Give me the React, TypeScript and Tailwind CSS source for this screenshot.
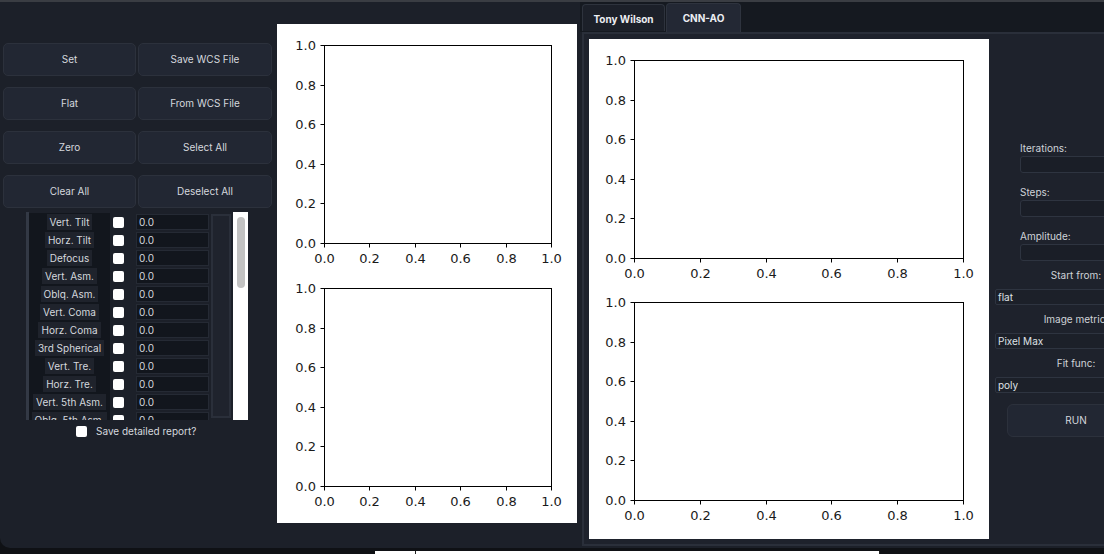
const ui = "font-['Inter','Liberation_Sans',sans-serif]";

const TICKS = [0, 0.2, 0.4, 0.6, 0.8, 1.0];

const ZERNIKE = [
  'Vert. Tilt',
  'Horz. Tilt',
  'Defocus',
  'Vert. Asm.',
  'Oblq. Asm.',
  'Vert. Coma',
  'Horz. Coma',
  '3rd Spherical',
  'Vert. Tre.',
  'Horz. Tre.',
  'Vert. 5th Asm.',
  'Oblq. 5th Asm.',
];

// One empty matplotlib axes: frame, outward ticks and 0.0..1.0 labels.
function Axes({ x, y, w, h }: { x: number; y: number; w: number; h: number }) {
  return (
    <g>
      <rect x={x + 0.5} y={y + 0.5} width={w} height={h} fill="none" stroke="#000" strokeWidth={1} />
      {TICKS.map((t) => {
        const ty = Math.round(y + h - t * h) + 0.5;
        const tx = Math.round(x + t * w) + 0.5;
        return (
          <g key={t}>
            <line x1={x + 0.5} x2={x - 3.5} y1={ty} y2={ty} stroke="#000" strokeWidth={1} />
            <text x={x - 8} y={ty} textAnchor="end" dominantBaseline="central">
              {t.toFixed(1)}
            </text>
            <line x1={tx} x2={tx} y1={y + h + 0.5} y2={y + h + 4.5} stroke="#000" strokeWidth={1} />
            <text x={tx} y={y + h + 15.5} textAnchor="middle" dominantBaseline="central">
              {t.toFixed(1)}
            </text>
          </g>
        );
      })}
    </g>
  );
}

function Figure({
  width,
  height,
  x,
  w,
  tops,
  h,
}: {
  width: number;
  height: number;
  x: number;
  w: number;
  tops: number[];
  h: number;
}) {
  return (
    <svg
      width={width}
      height={height}
      className="block bg-white"
      fontFamily="'DejaVu Sans', sans-serif"
      fontSize={13}
      fill="#1a1a1a"
    >
      {tops.map((top) => (
        <Axes key={top} x={x} y={top} w={w} h={h} />
      ))}
    </svg>
  );
}

function Button({ label, className = '' }: { label: string; className?: string }) {
  return (
    <div
      className={`flex h-[33px] items-center justify-center rounded-[5px] border border-[#2c313c] bg-[#222733] text-[10px] text-[#d5d8de] ${className}`}
    >
      {label}
    </div>
  );
}

function Checkbox() {
  return <span className="block size-[11px] rounded-[2px] bg-white" />;
}

function LeftPanel() {
  return (
    <div className="flex w-[277px] shrink-0 flex-col pt-[41px]">
      <div className="ml-[3px] grid w-[269px] grid-cols-[133px_134px] gap-x-[2px] gap-y-[11px]">
        <Button label="Set" />
        <Button label="Save WCS File" />
        <Button label="Flat" />
        <Button label="From WCS File" />
        <Button label="Zero" />
        <Button label="Select All" />
        <Button label="Clear All" />
        <Button label="Deselect All" />
      </div>

      {/* Zernike coefficient table */}
      <div className="ml-[26px] mt-[4px] flex h-[208px] w-[222px] overflow-hidden">
        <div className="w-[3px] bg-[#333945]" />
        <div className="flex w-[182px] flex-col pt-[1px]">
          {ZERNIKE.map((name) => (
            <div key={name} className="flex h-[18px] shrink-0 items-center">
              <div className="flex h-full w-[81px] items-center justify-center bg-[#12161d]">
                <span className="flex h-[16px] items-center bg-[#1f232c] px-[3px] text-[10px] whitespace-nowrap text-[#d5d8de]">
                  {name}
                </span>
              </div>
              <div className="flex w-[26px] pl-[3px]">
                <Checkbox />
              </div>
              <div className="flex h-[16px] w-[73px] items-center border border-[#252a34] bg-[#12161d] pl-[2px] text-[10px] text-[#d5d8de]">
                0.0
              </div>
            </div>
          ))}
        </div>
        <div className="my-[2px] w-[20px] border-2 border-[#2a2f3a] bg-[#1f232d]" />
        <div className="ml-[2px] w-[15px] bg-white pl-[4px] pt-[5px]">
          <div className="h-[71px] w-[8px] rounded-full bg-[#c2c2c2]" />
        </div>
      </div>

      <div className="ml-[76px] mt-[4px] flex items-center gap-[9px]">
        <Checkbox />
        <span className="text-[10px] text-[#d5d8de]">Save detailed report?</span>
      </div>
    </div>
  );
}

function Field({ label }: { label: string }) {
  return (
    <div className="flex w-[112px] flex-col">
      <span className="block h-[12px] text-[10px] leading-[12px] text-[#cfd2d8]">{label}</span>
      <div className="mt-[2px] h-[17px] rounded-[3px] border border-[#2e3440] bg-[#1a1e27]" />
    </div>
  );
}

function Select({ value }: { value: string }) {
  return (
    <div className="flex h-[16px] w-[162px] items-center rounded-[2px] border border-[#2e3440] bg-[#1c2029] pl-[2px] text-[10px] text-[#dfe1e5]">
      {value}
    </div>
  );
}

function Caption({ label }: { label: string }) {
  return (
    <div className="h-[12px] text-center text-[10px] leading-[12px] whitespace-nowrap text-[#cfd2d8]">
      {label}
    </div>
  );
}

function Controls() {
  return (
    <div className="ml-[4px] flex w-[166px] shrink-0 flex-col items-center">
      <div className="mt-[108px]">
        <Field label="Iterations:" />
      </div>
      <div className="mt-[13px]">
        <Field label="Steps:" />
      </div>
      <div className="mt-[13px]">
        <Field label="Amplitude:" />
      </div>
      <div className="mt-[8px]">
        <Caption label="Start from:" />
      </div>
      <div className="mt-[8px] w-full pl-[2px]">
        <Select value="flat" />
      </div>
      <div className="mt-[8px]">
        <Caption label="Image metric:" />
      </div>
      <div className="mt-[8px] w-full pl-[2px]">
        <Select value="Pixel Max" />
      </div>
      <div className="mt-[8px]">
        <Caption label="Fit func:" />
      </div>
      <div className="mt-[8px] w-full pl-[2px]">
        <Select value="poly" />
      </div>
      <div className="mt-[11px] w-[138px]">
        <Button label="RUN" className="rounded-[6px]" />
      </div>
    </div>
  );
}

function RightPanel() {
  return (
    <div className="ml-[3px] flex min-w-0 flex-1 flex-col">
      <div className="flex h-[30px] shrink-0 items-end bg-[#151920] pl-[2px]">
        <div className="mb-[1px] flex h-[27px] w-[83px] items-center justify-center rounded-t-[4px] border border-b-0 border-[#2e333d] bg-[#1c2029] pt-[2px] text-[10px] font-bold text-[#eceef2]">
          Tony Wilson
        </div>
        <div className="ml-[1px] flex h-[29px] w-[75px] items-start justify-center rounded-t-[4px] border border-b-0 border-[#2e333e] bg-[#232834] pt-[7px] text-[10px] font-bold text-[#eceef2]">
          CNN-AO
        </div>
      </div>
      <div className="ml-[2px] flex h-[514px] overflow-hidden border-2 border-r-0 border-[#2a2f3a] bg-[#1e222c]">
        <div className="ml-[5px] mt-[5px] shrink-0">
          <Figure width={400} height={500} x={45} w={329} tops={[21, 263]} h={198} />
        </div>
        <Controls />
      </div>
    </div>
  );
}

export default function App() {
  return (
    <div className={`flex h-[554px] w-[1104px] flex-col overflow-hidden bg-[#0f1115] ${ui}`}>
      <div className="flex h-[548px] shrink-0 overflow-hidden rounded-bl-[10px] border-t-2 border-[#3a3d43] bg-[#1c2029]">
        <LeftPanel />
        <div className="mt-[22px] shrink-0">
          <Figure width={300} height={499} x={47} w={227} tops={[21, 264]} h={198} />
        </div>
        <RightPanel />
      </div>
      {/* window behind, peeking out under the bottom edge */}
      <div className="ml-[375px] mt-[3px] flex h-[3px] w-[505px] bg-white">
        <div className="ml-[40px] w-px bg-[#222]" />
        <div className="ml-auto w-px bg-[#222]" />
      </div>
    </div>
  );
}
